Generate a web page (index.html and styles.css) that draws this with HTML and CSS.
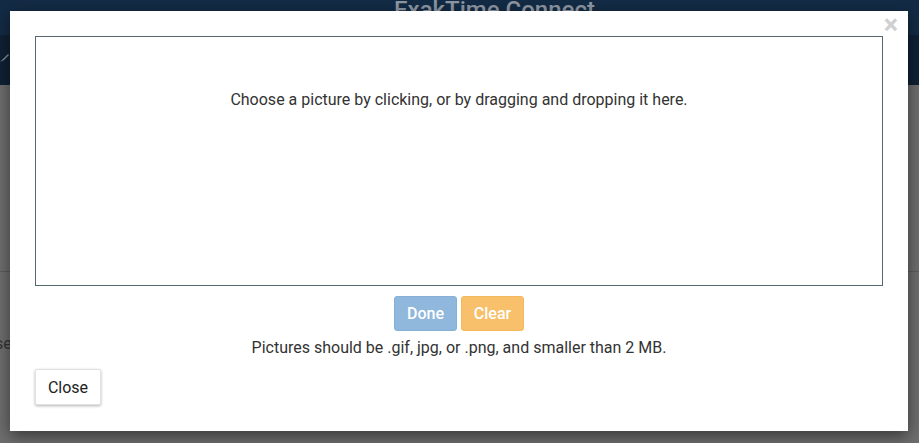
FILE: index.html
```html
<!DOCTYPE html>
<html lang="en">
<head>
    <meta charset="UTF-8">
    <title>ExakTime Connect</title>
    <link rel="stylesheet" href="styles.css">
</head>
<body>
    <!-- page behind the dialog -->
    <div class="page">
        <div class="page_header">ExakTime Connect</div>
        <div class="page_subbar">
            <svg class="page_icon" width="10" height="10" viewBox="0 0 10 10"><path d="M0 8 L4 6 L9 1 L8 0 L3 5 Z" fill="#8a8f96"/></svg>
        </div>
        <div class="page_body">
            <div class="page_rule"></div>
            <div class="page_text">se</div>
        </div>
    </div>

    <!-- picture upload dialog -->
    <div class="modal">
        <span class="modal_x">&times;</span>
        <div class="dropzone">Choose a picture by clicking, or by dragging and dropping it here.</div>
        <div class="modal_actions">
            <button class="btn btn_done">Done</button>
            <button class="btn btn_clear">Clear</button>
        </div>
        <p class="modal_hint">Pictures should be .gif, jpg, or .png, and smaller than 2 MB.</p>
        <button class="btn btn_close">Close</button>
    </div>
</body>
</html>
```

FILE: styles.css
```css
* {
    margin: 0;
    padding: 0;
    box-sizing: border-box;
    font-family: Roboto, "Liberation Sans", sans-serif;
}

body {
    width: 919px;
    height: 443px;
    overflow: hidden;
    background: #6e6e6e;
    position: relative;
}

/* Page behind overlay */
.page_header {
    height: 35px;
    background: #132b45;
    color: #8d97a2;
    font-size: 24px;
    font-weight: 500;
    text-align: center;
    line-height: 20px;
    padding-left: 70px;
    overflow: hidden;
}

.page_subbar {
    height: 50px;
    background: #0f2135;
    padding-top: 19px;
}

.page_icon {
    display: block;
}

.page_body {
    padding-top: 186px;
}

.page_rule {
    height: 1px;
    background: #5c5c5c;
}

.page_text {
    margin-top: 62px;
    margin-left: -5px;
    font-size: 16px;
    color: #333;
}

/* Modal */
.modal {
    position: absolute;
    left: 10px;
    top: 11px;
    width: 898px;
    height: 420px;
    background: #fff;
    padding: 25px 25px 0 25px;
    box-shadow: 0 5px 15px rgba(0, 0, 0, 0.5);
    text-align: center;
}

.modal_x {
    position: absolute;
    right: 10px;
    top: -2px;
    font-size: 27px;
    font-weight: 700;
    color: #d0d0d0;
}

.dropzone {
    height: 250px;
    border: 1px solid #56676f;
    padding-top: 53px;
    font-size: 16px;
    color: #333;
}

.modal_actions {
    display: flex;
    justify-content: center;
    gap: 4px;
    margin-top: 10px;
}

.btn {
    height: 35px;
    border: 1px solid transparent;
    border-radius: 3px;
    font-size: 16px;
    font-weight: 500;
    color: #fff;
}

.btn_done {
    width: 63px;
    background: #8fb8dc;
    border-color: #86b0d6;
}

.btn_clear {
    width: 63px;
    background: #f8c06a;
    border-color: #f4b95e;
}

.modal_hint {
    margin-top: 7px;
    font-size: 16px;
    color: #333;
}

.btn_close {
    display: block;
    width: 66px;
    height: 36px;
    margin-top: 12px;
    background: #fff;
    color: #222;
    font-weight: 400;
    border: 1px solid #e2e2e2;
    border-radius: 2px;
    box-shadow: 0 1px 3px rgba(0, 0, 0, 0.3);
}
```
